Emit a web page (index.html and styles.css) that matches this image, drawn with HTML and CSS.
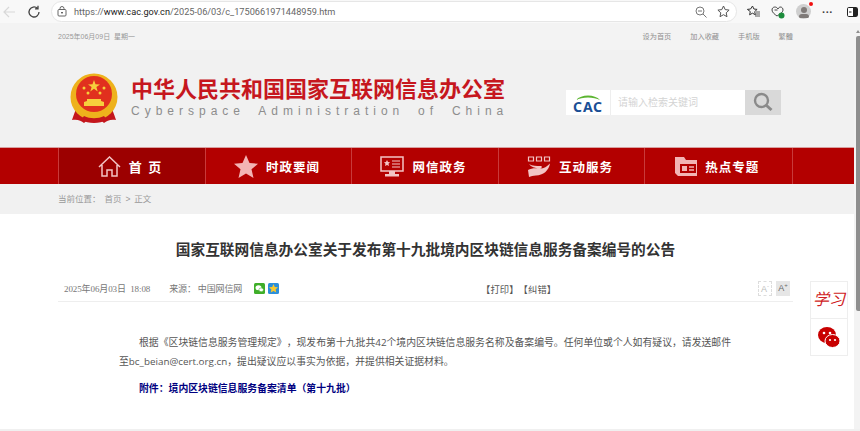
FILE: index.html
```html
<!DOCTYPE html>
<html lang="zh-CN">
<head>
    <meta charset="UTF-8">
    <title>国家互联网信息办公室关于发布第十九批境内区块链信息服务备案编号的公告</title>
    <link rel="stylesheet" href="styles.css">
</head>
<body>
    <div class="browser">
        <svg class="b-back" width="14" height="14" viewBox="0 0 14 14"><path d="M13 7H2M7 2 2 7l5 5" fill="none" stroke="#d8d8d8" stroke-width="1.2"/></svg>
        <svg class="b-reload" width="14" height="14" viewBox="0 0 14 14"><path d="M12 7a5 5 0 1 1-1.6-3.7M11 .8v3H8" fill="none" stroke="#444" stroke-width="1.3"/></svg>
        <div class="address">
            <svg width="10" height="11" viewBox="0 0 10 11"><rect x="1" y="3.5" width="8" height="6.5" rx="1" fill="none" stroke="#666"/><path d="M3 3.5V2.5a2 2 0 0 1 4 0v1" fill="none" stroke="#666"/><rect x="4" y="6" width="2" height="1.4" fill="#666"/></svg>
            <span class="url">https://<b>www.cac.gov.cn</b>/2025-06/03/c_1750661971448959.htm</span>
            <svg width="12" height="12" viewBox="0 0 12 12"><circle cx="5" cy="5" r="4" fill="none" stroke="#777"/><path d="m8 8 3.5 3.5M3 5h4" stroke="#777"/></svg>
            <svg width="13" height="13" viewBox="0 0 13 13"><path d="m6.5 1 1.7 3.6 3.9.5-2.9 2.7.8 3.9-3.5-2-3.5 2 .8-3.9L.9 5.100l3.900-.5z" fill="none" stroke="#555"/></svg>
        </div>
        <div class="b-tools">
            <svg width="13" height="13" viewBox="0 0 13 13"><path d="m5.500 1 1.400 3 3.200.4-2.400 2.200.7 3.200-2.900-1.600-2.900 1.600.7-3.200L.4 4.400l3.200-.4z" fill="none" stroke="#333"/><path d="M9 7h4M9 9h4M8 11h5" stroke="#333" stroke-width=".8"/></svg>
            <svg width="14" height="14" viewBox="0 0 14 14"><path d="M7 4C5.500 1 1 1.500 1 5c0 2.500 3 4.500 5 6 2-1.500 6-3.500 6-6 0-3.500-4-4-5-1z" fill="none" stroke="#444"/><path d="M3.500 5h3" stroke="#444"/><circle cx="10.500" cy="10.500" r="3" fill="#1c8c3c"/></svg>
            <div class="avatar"><i class="head"></i><i class="shoulders"></i><i class="dot"></i></div>
            <span class="b-dots">···</span>
            <svg width="11" height="10" viewBox="0 0 11 10"><rect x=".5" y=".5" width="10" height="9" rx="1.200" fill="#fff" stroke="#222"/><rect x="6" y="1" width="4" height="8" fill="#222"/><path d="M2 5h2.500" stroke="#222"/></svg>
        </div>
    </div>

    <div class="page">
        <div class="topbar">
            <div class="wrap topbar-in">
                <span>2025年06月09日&nbsp; 星期一</span>
                <div class="toplinks">
                    <a>设为首页</a>
                    <a>加入收藏</a>
                    <a>手机版</a>
                    <a>繁體</a>
                </div>
            </div>
        </div>

        <div class="header">
            <div class="logo">
                <svg class="emblem" width="48" height="52" viewBox="0 0 48 52">
                    <path d="M6 36c-2 5-3 8-4 11 6-1 9 1 12 3l7-6z" fill="#c4161c"/>
                    <path d="M42 36c2 5 3 8 4 11-6-1-9 1-12 3l-7-6z" fill="#c4161c"/>
                    <circle cx="24" cy="24" r="23.500" fill="#eeb21c"/>
                    <circle cx="24" cy="21" r="18" fill="#e1301e"/>
                    <path d="m24 7 1.500 4.300 4.500.1-3.600 2.700 1.300 4.300-3.700-2.600-3.700 2.600 1.300-4.300L18 11.400l4.500-.1z" fill="#f6cf3c"/>
                    <circle cx="14" cy="15" r="1.500" fill="#f6cf3c"/>
                    <circle cx="34" cy="15" r="1.500" fill="#f6cf3c"/>
                    <circle cx="18" cy="20" r="1.500" fill="#f6cf3c"/>
                    <circle cx="30" cy="20" r="1.500" fill="#f6cf3c"/>
                    <path d="M14 33v-4l3-1v-2h14v2l3 1v4z" fill="#f6cf3c"/>
                    <path d="M7 33c8 10 26 10 34 0l2 3c-8 12-30 12-38 0z" fill="#eeb21c"/>
                    <path d="M14 43c6 3 14 3 20 0l3 4c-8 4-18 4-26 0z" fill="#c4161c"/>
                </svg>
                <div class="logo-text">
                    <div class="logo-cn">中华人民共和国国家互联网信息办公室</div>
                    <div class="logo-en">Cyberspace Administration of China</div>
                </div>
            </div>
            <div class="search">
                <div class="cac">
                    <svg width="24" height="5" viewBox="0 0 24 5"><path d="M0 5C5-1 19-1 24 5 18 1.500 6 1.500 0 5z" fill="#5cb531"/></svg>
                    <span>CAC</span>
                </div>
                <div class="search-input">请输入检索关键词</div>
                <div class="search-btn">
                    <svg width="20" height="20" viewBox="0 0 20 20"><circle cx="8.500" cy="8.500" r="6.500" fill="none" stroke="#8a8a8a" stroke-width="2.400"/><path d="m13.500 13.500 5 4.500" stroke="#8a8a8a" stroke-width="3"/></svg>
                </div>
            </div>
        </div>

        <div class="nav">
            <ul class="wrap nav-list">
                <li class="active">
                    <svg width="23" height="21" viewBox="0 0 23 21"><path d="M1 11 11.500 1 22 11M4 9v11h5v-6h5v6h5V9" fill="none" stroke="#f3c4c4" stroke-width="1.500"/></svg>
                    <span class="home-label">首 页</span>
                </li>
                <li>
                    <svg width="24" height="23" viewBox="0 0 24 23"><path d="m12 0 3.500 8 8.500.8-6.500 5.500 2 8.700L12 18.400 4.500 23l2-8.700L0 8.800 8.500 8z" fill="#f3b4b4"/></svg>
                    <span>时政要闻</span>
                </li>
                <li>
                    <svg width="24" height="21" viewBox="0 0 24 21"><rect x="1" y="1" width="22" height="14" fill="none" stroke="#f3c4c4" stroke-width="1.500"/><path d="m7 4 1 2 2 .2-1.500 1.500.5 2.200L7 9l-2 1 .5-2.200L4 6.200 6 6z" fill="#f3c4c4"/><path d="M12 5h8M12 8h8M12 11h8" stroke="#f3c4c4"/><path d="M9 15h6v3H9zM5 18h14v2.500H5z" fill="#f3c4c4"/></svg>
                    <span>网信政务</span>
                </li>
                <li>
                    <svg width="24" height="21" viewBox="0 0 24 21"><path d="M1.500 1h5v4h-5zM9.500 1h5v4h-5zM17.500 1h5v4h-5z" fill="none" stroke="#f3c4c4" stroke-width="1.200"/><path d="M2 8c3 2 8 2 11 2 3 0 2 2 0 2.500 4 0 7-2 10-5-1 7-7 12-14 12-3 0-5 1-7 1.500L1 14c3-2 8-2 11-1.500C8 12 4 11 2 8z" fill="#f3c4c4"/></svg>
                    <span>互动服务</span>
                </li>
                <li>
                    <svg width="22" height="20" viewBox="0 0 22 20"><path d="M0 1h9l2 3h11v16H3L0 17z" fill="#f3b4b4"/><path d="M5 8h16v9H5z" fill="#b30000"/><path d="M7 10h5v5H7z" fill="#f3b4b4"/><path d="M14 11h5M14 14h5" stroke="#f3b4b4" stroke-width="1.300"/></svg>
                    <span>热点专题</span>
                </li>
            </ul>
        </div>

        <div class="crumbs">
            <div class="wrap">当前位置：<span class="crumb-links">首页 &gt; 正文</span></div>
        </div>

        <div class="wrap article">
            <h1>国家互联网信息办公室关于发布第十九批境内区块链信息服务备案编号的公告</h1>
            <div class="meta">
                <span class="date">2025年06月03日&nbsp; 18:08</span>
                <span class="source">来源：&nbsp;中国网信网</span>
                <span class="share">
                    <svg width="11" height="11" viewBox="0 0 11 11"><rect width="11" height="11" rx="1.500" fill="#3fae29"/><ellipse cx="4.500" cy="4.800" rx="3" ry="2.500" fill="#fff"/><ellipse cx="7.200" cy="6.800" rx="2.300" ry="1.900" fill="#fff" stroke="#3fae29" stroke-width=".5"/></svg>
                    <svg width="11" height="11" viewBox="0 0 11 11"><rect width="11" height="11" rx="1.500" fill="#2b8fdc"/><path d="m5.500 1 1.300 3 3.200.3-2.400 2.100.7 3.100-2.800-1.600-2.800 1.600.7-3.100L1 4.300 4.200 4z" fill="#f8c92f"/></svg>
                </span>
                <span class="tools">【打印】【纠错】</span>
                <span class="font-btns">
                    <span class="fs fs-small">A<sup>-</sup></span>
                    <span class="fs fs-big">A<sup>+</sup></span>
                </span>
            </div>
            <div class="content">
                <p>根据《区块链信息服务管理规定》，现发布第十九批共42个境内区块链信息服务名称及备案编号。任何单位或个人如有疑议，请发送邮件至bc_beian@cert.org.cn，提出疑议应以事实为依据，并提供相关证据材料。</p>
                <p class="attach"><b>附件：境内区块链信息服务备案清单（第十九批）</b></p>
            </div>
        </div>

        <div class="side">
            <div class="side-xuexi">学习</div>
            <div class="side-wx">
                <svg width="22" height="21" viewBox="0 0 22 21"><ellipse cx="9" cy="8" rx="9" ry="8" fill="#c80000"/><circle cx="6" cy="6" r="1.300" fill="#fff"/><circle cx="12" cy="6" r="1.300" fill="#fff"/><ellipse cx="14.500" cy="14" rx="7.500" ry="6.500" fill="#c80000" stroke="#fff"/><circle cx="12" cy="13" r="1.100" fill="#fff"/><circle cx="17" cy="13" r="1.100" fill="#fff"/></svg>
            </div>
        </div>
    </div>

    <div class="scrollbar"><i></i></div>
    <div class="bottom-edge"></div>
</body>
</html>
```

FILE: styles.css
```css
* {
    box-sizing: border-box;
}
html, body {
    margin: 0;
    height: 431px;
    overflow: hidden;
}
body {
    font-family: "Liberation Sans", "Noto Sans CJK SC", sans-serif;
    background-color: #fff;
    color: #666;
    position: relative;
    text-spacing-trim: space-all;
}
.wrap {
    width: 735px;
    margin-left: 58px;
}

/* browser chrome */
.browser {
    height: 23px;
    display: flex;
    align-items: center;
    background-color: #f8f8f8;
    padding-left: 1px;
}
.b-back {
    margin-left: 1px;
}
.b-reload {
    margin-left: 11px;
}
.address {
    width: 686px;
    height: 21px;
    margin-left: 10px;
    padding: 0 6px 0 5px;
    display: flex;
    align-items: center;
    gap: 7px;
    background-color: #fff;
    border: 1px solid #e6e6e6;
    border-radius: 11px;
}
.url {
    flex: 1;
    font-family: Roboto, sans-serif;
    font-size: 9.200px;
    color: #666;
}
.url b {
    font-weight: 400;
    color: #222;
}
.address svg:last-child {
    margin-left: 3px;
}
.b-tools {
    display: flex;
    align-items: center;
    margin-left: 10px;
    gap: 11px;
}
.avatar {
    width: 15px;
    height: 15px;
    border-radius: 50%;
    background-color: #cfcfcf;
    position: relative;
}
.avatar .head {
    position: absolute;
    left: 5px;
    top: 3px;
    width: 6px;
    height: 6px;
    border-radius: 50%;
    background-color: #7f7a78;
}
.avatar .shoulders {
    position: absolute;
    left: 3px;
    top: 10px;
    width: 10px;
    height: 4px;
    border-radius: 5px 5px 2px 2px;
    background-color: #7f7a78;
}
.avatar .dot {
    position: absolute;
    right: -2px;
    top: -2px;
    width: 4px;
    height: 4px;
    border-radius: 50%;
    background-color: #f01010;
}
.b-dots {
    width: 14px;
    font-size: 11px;
    font-weight: 700;
    color: #444;
}

/* site */
.page {
    position: relative;
}
.topbar {
    height: 27px;
    background-color: #f3f3f3;
    font-size: 7px;
    color: #999;
}
.topbar-in {
    height: 26px;
    display: flex;
    align-items: center;
    justify-content: space-between;
}
.toplinks {
    display: flex;
    gap: 19px;
    font-size: 7.200px;
    color: #8f8f8f;
}
.header {
    height: 97px;
    background-color: #f1f1f1;
    display: flex;
    align-items: center;
    padding: 1px 0 0 70px;
}
.logo {
    display: flex;
    align-items: center;
    width: 496px;
}
.emblem {
    flex: none;
}
.logo-text {
    margin: 0 0 3px 13px;
}
.logo-cn {
    font-size: 22px;
    line-height: 26px;
    font-weight: 700;
    color: #c6171e;
    white-space: nowrap;
}
.logo-en {
    font-size: 12px;
    line-height: 16px;
    color: #8d8d8d;
    letter-spacing: 5px;
    word-spacing: 5.500px;
    white-space: nowrap;
}
.search {
    display: flex;
    height: 25px;
    width: 216px;
    margin-top: 6px;
}
.cac {
    width: 45px;
    background-color: #fff;
    border-right: 1px solid #eee;
    display: flex;
    flex-direction: column;
    align-items: center;
    font-family: "Noto Sans", sans-serif;
    font-size: 14px;
    line-height: 13px;
    font-weight: 700;
    letter-spacing: .8px;
    color: #1a4f96;
    padding-top: 5px;
}
.search-input {
    width: 134px;
    background-color: #fff;
    font-size: 10px;
    line-height: 25px;
    padding-left: 7px;
    color: #d4d4d4;
}
.search-btn {
    width: 36px;
    background-color: #d9d9d9;
    display: flex;
    align-items: center;
    justify-content: center;
}
.nav {
    height: 37px;
    background-color: #b30000;
    border-top: 1px solid #d8a0a0;
    margin-right: 6px;
}
.nav-list {
    list-style: none;
    padding: 0;
    height: 36px;
    display: grid;
    grid-template-columns: repeat(5, 1fr);
    margin-top: 0;
    margin-bottom: 0;
    border-left: 1px solid #c83a3a;
    border-right: 1px solid #c83a3a;
}
.nav-list li {
    display: flex;
    align-items: center;
    justify-content: center;
    gap: 8px;
    padding-right: 3px;
    color: #fff;
    font-size: 12.500px;
    font-weight: 700;
    letter-spacing: 1px;
    border-right: 1px solid #c83a3a;
}
.nav-list li:last-child {
    border-right: 0;
}
.nav-list .active {
    background-color: #9c0000;
}
.home-label {
    font-size: 13px;
    letter-spacing: 1.500px;
}
.crumbs {
    height: 30px;
    background-color: #f1f1f1;
    font-size: 8.500px;
    line-height: 30px;
    color: #999;
}
.crumb-links {
    margin-left: 4px;
    word-spacing: 1.500px;
}
h1 {
    margin: 0;
    padding-top: 25px;
    height: 67px;
    font-size: 14.700px;
    line-height: 22px;
    font-weight: 700;
    color: #333;
    text-align: center;
}
.meta {
    height: 21px;
    display: flex;
    align-items: center;
    border-bottom: 1px solid #eee;
    padding: 0 3px 5px 6px;
    font-family: "Liberation Serif", "Noto Sans CJK SC", serif;
    font-size: 9px;
    color: #777;
    position: relative;
}
.date {
    letter-spacing: -.1px;
}
.source {
    margin-left: 19px;
    letter-spacing: -.15px;
}
.share {
    display: flex;
    gap: 3px;
    margin-left: 12px;
}
.tools {
    position: absolute;
    left: 423px;
    font-size: 9.300px;
    letter-spacing: .1px;
    color: #555;
}
.font-btns {
    margin-left: auto;
    display: flex;
    gap: 4px;
}
.fs {
    width: 14px;
    height: 15px;
    font-family: "Liberation Sans", sans-serif;
    font-size: 9px;
    line-height: 15px;
    text-align: center;
    color: #888;
}
.fs sup {
    font-size: 6px;
    line-height: 0;
}
.fs-small {
    border: 1px dashed #ddd;
    color: #bbb;
}
.fs-big {
    background-color: #e6e6e6;
    color: #666;
}
.content {
    padding: 31px 57px 0 61px;
    font-family: "Open Sans", "Noto Sans CJK SC", sans-serif;
    font-size: 9.850px;
    line-height: 19px;
    color: #555;
}
.content p {
    margin: 0 0 8px;
    text-indent: 20px;
}
.attach {
    color: #000080;
}

/* right side float */
.side {
    position: absolute;
    left: 810px;
    top: 258px;
    width: 38px;
    height: 75px;
    background-color: #fff;
    border: 1px solid #eee;
}
.side-xuexi {
    height: 37px;
    border-bottom: 1px solid #eee;
    font-family: "Liberation Serif", "Noto Sans CJK SC", serif;
    font-size: 16px;
    font-style: italic;
    line-height: 36px;
    color: #d01c24;
    text-align: center;
    white-space: nowrap;
}
.side-wx {
    height: 36px;
    display: flex;
    align-items: center;
    justify-content: center;
}
.scrollbar {
    position: absolute;
    right: 0;
    top: 23px;
    bottom: 0;
    width: 6px;
    background-color: #f3f3f3;
}
.scrollbar::before {
    content: "";
    position: absolute;
    top: 7px;
    left: 2px;
    border-left: 2px solid transparent;
    border-right: 2px solid transparent;
    border-bottom: 3px solid #8e8e8e;
}
.scrollbar i {
    position: absolute;
    top: 13px;
    left: 2px;
    width: 4px;
    height: 275px;
    background-color: #8e8e8e;
    border-radius: 2px 0 0 2px;
}
.bottom-edge {
    position: absolute;
    left: 0;
    right: 0;
    bottom: 0;
    height: 2px;
    background-color: #f0f0f0;
}
```
